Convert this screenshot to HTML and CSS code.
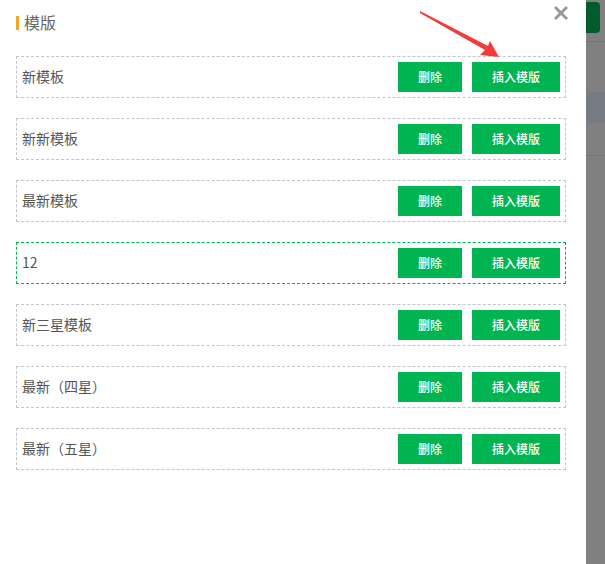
FILE: index.html
```html
<!DOCTYPE html>
<html lang="zh-CN">
<head>
    <meta charset="UTF-8">
    <title>模版</title>
    <link rel="stylesheet" href="styles.css">
</head>
<body>
    <!-- Template dialog -->
    <div class="panel">
        <div class="panel-head">
            <span class="bar"></span>
            <span class="title">模版</span>
        </div>

        <svg class="close" width="16" height="16" viewBox="0 0 16 16">
            <path d="M2 2 L14 14 M14 2 L2 14" stroke="#999" stroke-width="3" fill="none"/>
        </svg>

        <div class="row">
            <span class="name">新模板</span>
            <button class="btn btn-del">删除</button>
            <button class="btn btn-insert">插入模版</button>
        </div>
        <div class="row">
            <span class="name">新新模板</span>
            <button class="btn btn-del">删除</button>
            <button class="btn btn-insert">插入模版</button>
        </div>
        <div class="row">
            <span class="name">最新模板</span>
            <button class="btn btn-del">删除</button>
            <button class="btn btn-insert">插入模版</button>
        </div>
        <div class="row active">
            <span class="name">12</span>
            <button class="btn btn-del">删除</button>
            <button class="btn btn-insert">插入模版</button>
        </div>
        <div class="row">
            <span class="name">新三星模板</span>
            <button class="btn btn-del">删除</button>
            <button class="btn btn-insert">插入模版</button>
        </div>
        <div class="row">
            <span class="name">最新（四星）</span>
            <button class="btn btn-del">删除</button>
            <button class="btn btn-insert">插入模版</button>
        </div>
        <div class="row">
            <span class="name">最新（五星）</span>
            <button class="btn btn-del">删除</button>
            <button class="btn btn-insert">插入模版</button>
        </div>

        <!-- annotation arrow -->
        <svg class="arrow" width="605" height="80" viewBox="0 0 605 80">
            <polygon points="420,11 488,46 490,41 499,57 480,55 485,50 420,13" fill="#f33a3a"/>
        </svg>
    </div>

    <!-- page behind the overlay -->
    <div class="backdrop">
        <div class="bd-btn"></div>
        <div class="bd-line"></div>
        <div class="bd-band"></div>
        <div class="bd-line bd-line2"></div>
    </div>
</body>
</html>
```

FILE: styles.css
```css
/* General */
body {
    margin: 0;
    padding: 0;
    display: flex;
    height: 564px;
    overflow: hidden;
    font-family: "Microsoft YaHei", "Noto Sans CJK SC", "Liberation Sans", sans-serif;
}

/* Dialog panel */
.panel {
    position: relative;
    width: 586px;
    height: 564px;
    box-sizing: border-box;
    padding: 0 20px 0 16px;
    background: #fff;
}
.panel-head {
    display: flex;
    align-items: flex-start;
    height: 56px;
    padding-top: 13px;
    box-sizing: border-box;
}
.bar {
    width: 3px;
    height: 14px;
    margin-top: 3px;
    background: #f5a623;
}
.title {
    margin-left: 5px;
    font-size: 16px;
    line-height: 18px;
    color: #666;
}
.close {
    position: absolute;
    top: 5px;
    right: 17px;
}

/* Template rows */
.row {
    display: flex;
    align-items: center;
    height: 42px;
    box-sizing: border-box;
    padding: 0 5px;
    margin-bottom: 20px;
    border: 1px dashed #c4c4c4;
}
.row.active {
    border-color: #00b451;
}
.name {
    flex: 1;
    font-size: 14px;
    line-height: 20px;
    padding-bottom: 2px;
    color: #555;
}
.btn {
    height: 30px;
    border: none;
    padding: 0 0 2px;
    background: #00b451;
    color: #fff;
    font-family: inherit;
    font-size: 12px;
    font-weight: 500;
    cursor: pointer;
}
.btn-del {
    width: 64px;
}
.btn-insert {
    width: 88px;
    margin-left: 10px;
}

.arrow {
    position: absolute;
    top: 0;
    left: 0;
    pointer-events: none;
}

/* Backdrop strip */
.backdrop {
    flex: 1;
    background: #808080;
    position: relative;
}
.bd-btn {
    position: absolute;
    top: 2px;
    left: 0;
    width: 14px;
    height: 31px;
    background: #005c2a;
    border-radius: 0 4px 4px 0;
}
.bd-line {
    position: absolute;
    top: 41px;
    left: 0;
    right: 0;
    height: 1px;
    background: #747474;
}
.bd-line2 {
    top: 155px;
}
.bd-band {
    position: absolute;
    top: 92px;
    left: 0;
    right: 0;
    height: 31px;
    background: #777b83;
}
```
